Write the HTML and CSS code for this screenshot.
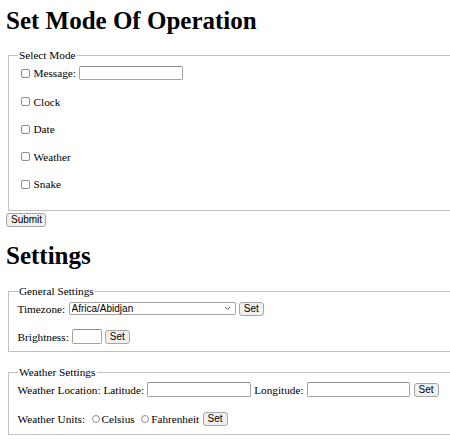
FILE: index.html
```html
<!DOCTYPE html>
<html>
<head>
<meta charset="utf-8">
<link rel="stylesheet" href="styles.css">
</head>
<body>
<div class="page">
  <h1 class="title">Set Mode Of Operation</h1>
  <form class="mode-form">
    <fieldset class="box box-mode">
      <legend class="legend">Select Mode</legend>
      <div class="rows rows-mode">
        <label class="row row-tall"><input type="checkbox" class="check"><span>Message:</span><input type="text" class="text-input"></label>
        <label class="row"><input type="checkbox" class="check"><span>Clock</span></label>
        <label class="row"><input type="checkbox" class="check"><span>Date</span></label>
        <label class="row"><input type="checkbox" class="check"><span>Weather</span></label>
        <label class="row"><input type="checkbox" class="check"><span>Snake</span></label>
      </div>
    </fieldset>
    <button type="button" class="btn btn-submit">Submit</button>
  </form>

  <h1 class="title title-settings">Settings</h1>

  <fieldset class="box box-general">
    <legend class="legend">General Settings</legend>
    <div class="rows rows-general">
      <div class="row row-ctl">
        <span>Timezone:</span>
        <span class="select-wrap">
          <select class="select"><option>Africa/Abidjan</option></select>
          <svg class="chevron" width="7" height="5" viewBox="0 0 7 5"><path d="M1 1 L3.5 3.5 L6 1" fill="none" stroke="#555" stroke-width="1"/></svg>
        </span>
        <button type="button" class="btn btn-set">Set</button>
      </div>
      <div class="row row-ctl">
        <span>Brightness:</span>
        <input type="text" class="text-input input-small">
        <button type="button" class="btn btn-set">Set</button>
      </div>
    </div>
  </fieldset>

  <fieldset class="box box-weather">
    <legend class="legend">Weather Settings</legend>
    <div class="rows rows-weather">
      <div class="row row-ctl">
        <span>Weather Location: Latitude:</span>
        <input type="text" class="text-input">
        <span>Longitude:</span>
        <input type="text" class="text-input">
        <button type="button" class="btn btn-set">Set</button>
      </div>
      <div class="row row-ctl">
        <span>Weather Units:</span>
        <label class="radio-label"><input type="radio" name="units" class="radio"><span>Celsius</span></label>
        <label class="radio-label"><input type="radio" name="units" class="radio"><span>Fahrenheit</span></label>
        <button type="button" class="btn btn-set">Set</button>
      </div>
    </div>
  </fieldset>
</div>
</body>
</html>
```
FILE: styles.css
```css
html, body {
  margin: 0;
  padding: 0;
  overflow: hidden;
  background: #fff;
}
body {
  font-family: "Liberation Serif", "Times New Roman", serif;
  font-size: 11.25px;
  color: #000;
}
.page {
  width: 470px;
  padding: 7px 0 0 6px;
}
.title {
  margin: 0;
  font-size: 25px;
  line-height: 28px;
  font-weight: bold;
}
.title-settings {
  margin-top: 15px;
}
.mode-form {
  margin: 13px 0 0;
}
.box {
  margin: 0 1.5px;
  padding: 3px 9px 19px;
  border: 1px solid #c0c0c0;
  min-width: 0;
}
.box-general {
  margin-top: 14px;
  padding-bottom: 7px;
}
.box-weather {
  margin-top: 13px;
  padding-bottom: 8px;
}
.legend {
  padding: 0 1.5px;
  font-size: 11.25px;
  line-height: 14px;
}
.rows {
  display: flex;
  flex-direction: column;
  gap: 13.5px;
}
.rows-general { gap: 13px; }
.rows-weather { gap: 14px; }
.row {
  display: flex;
  align-items: center;
  height: 14px;
  white-space: nowrap;
}
.row-tall { height: 16px; }
.row-ctl { height: 15px; gap: 3.3px; }
.check {
  appearance: none;
  -webkit-appearance: none;
  width: 9px;
  height: 9px;
  margin: 0 3.5px 0 3.5px;
  border: 1px solid #8d8d8d;
  border-radius: 2px;
  background: #fff;
  flex: none;
}
.row-tall .text-input { margin-left: 3px; }
.text-input {
  box-sizing: border-box;
  width: 103.5px;
  height: 14.5px;
  margin: 0;
  padding: 0 2px;
  border: 1px solid #a4a4a4;
  border-top-color: #8c8c8c;
  border-radius: 2px;
  background: #fff;
  font-family: "Liberation Sans", Arial, sans-serif;
  font-size: 10px;
  flex: none;
}
.input-small { width: 29.5px; }
.btn {
  box-sizing: border-box;
  margin: 0;
  padding: 0 4px;
  height: 14px;
  border: 1px solid #a6a6a6;
  border-radius: 3px;
  background: #f0f0f0;
  font-family: "Liberation Sans", Arial, sans-serif;
  font-size: 10px;
  line-height: 12px;
  color: #000;
  flex: none;
}
.btn-submit {
  display: block;
  margin-top: 2px;
  width: 40px;
}
.btn-set {
  width: 25px;
  padding: 0;
}
.select-wrap {
  position: relative;
  display: inline-flex;
  flex: none;
}
.select {
  appearance: none;
  -webkit-appearance: none;
  box-sizing: border-box;
  width: 167px;
  height: 13px;
  margin: 0;
  padding: 0 2px;
  border: 1px solid #a4a4a4;
  border-radius: 2px;
  background-color: #fff;
  font-family: "Liberation Sans", Arial, sans-serif;
  font-size: 10px;
  color: #000;
  outline: none;
}
.chevron {
  position: absolute;
  right: 5px;
  top: 4px;
}
.radio-label {
  display: inline-flex;
  align-items: center;
  gap: 1.7px;
  margin-left: 3.5px;
}
.radio {
  appearance: none;
  -webkit-appearance: none;
  width: 8px;
  height: 8px;
  margin: 0;
  border: 1px solid #8d8d8d;
  border-radius: 50%;
  background: #fff;
  flex: none;
}
```
